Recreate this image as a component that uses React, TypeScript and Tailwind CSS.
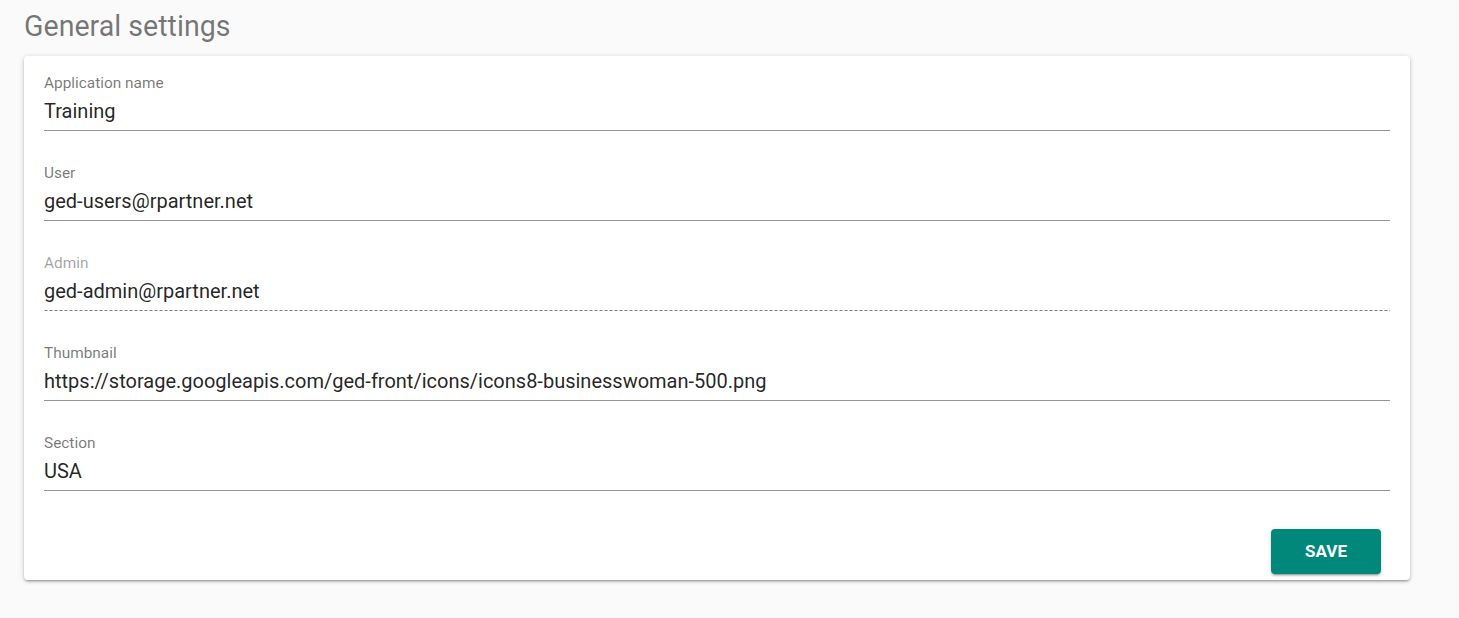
import React from "react";

const fields = [
  { label: "Application name", value: "Training" },
  { label: "User", value: "ged-users@rpartner.net" },
  { label: "Admin", value: "ged-admin@rpartner.net", disabled: true },
  { label: "Thumbnail", value: "https://storage.googleapis.com/ged-front/icons/icons8-businesswoman-500.png" },
  { label: "Section", value: "USA" },
];

export default function App() {
  return (
    <div className="min-h-[618px] w-full bg-[#fafafa] pl-[24px] pr-[49px]" style={{ fontFamily: "Roboto, 'Liberation Sans', sans-serif" }}>
      <h1 className="pt-[8px] text-[28.6px] leading-[36px] font-normal text-[rgba(0,0,0,0.54)]">General settings</h1>
      <div className="mt-[12px] rounded-[4px] bg-white px-[20px] pt-[18px] pb-[6px] shadow-[0_2px_2px_0_rgba(0,0,0,0.14),0_3px_1px_-2px_rgba(0,0,0,0.12),0_1px_5px_0_rgba(0,0,0,0.2)]">
        <div className="flex flex-col gap-[33px]">
          {fields.map((f) => (
            <div key={f.label} className="flex flex-col">
              <div className={`h-[18px] text-[15.4px] leading-[18px] ${f.disabled ? "text-[rgba(0,0,0,0.38)]" : "text-[rgba(0,0,0,0.54)]"}`}>{f.label}</div>
              {f.disabled ? (
                <div className="h-[39px] bg-[linear-gradient(to_right,rgba(0,0,0,0.5)_60%,transparent_60%)] bg-[length:5px_1px] bg-bottom bg-repeat-x pb-[1px] text-[20px] leading-[38px] text-[rgba(0,0,0,0.87)]">{f.value}</div>
              ) : (
                <div className="h-[39px] border-b border-[rgba(0,0,0,0.42)] text-[20px] leading-[38px] text-[rgba(0,0,0,0.87)]">{f.value}</div>
              )}
            </div>
          ))}
        </div>
        <div className="mt-[38px] flex justify-end pr-[9px]">
          <button className="h-[45px] w-[110px] rounded-[4px] bg-[#00897b] text-[17px] font-bold text-white shadow-[0_3px_1px_-2px_rgba(0,0,0,0.2),0_2px_2px_0_rgba(0,0,0,0.14),0_1px_5px_0_rgba(0,0,0,0.12)]">SAVE</button>
        </div>
      </div>
    </div>
  );
}
